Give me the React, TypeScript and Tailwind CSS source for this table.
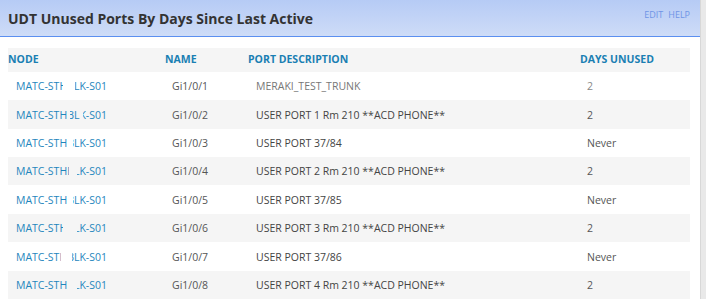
import React from 'react'

type Row = { node: string; masks: [number, number][]; name: string; desc: string; days: string; dim?: boolean }

const rows: Row[] = [
  { node: 'MATC-STHBLK-S01', masks: [[47, 12]], name: 'Gi1/0/1', desc: 'MERAKI_TEST_TRUNK', days: '2', dim: true },
  { node: 'MATC-STHBLK-S01', masks: [[51, 3], [64, 3]], name: 'Gi1/0/2', desc: 'USER PORT 1 Rm 210 **ACD PHONE**', days: '2' },
  { node: 'MATC-STHBLK-S01', masks: [[51, 6]], name: 'Gi1/0/3', desc: 'USER PORT 37/84', days: 'Never' },
  { node: 'MATC-STHBLK-S01', masks: [[53, 8]], name: 'Gi1/0/4', desc: 'USER PORT 2 Rm 210 **ACD PHONE**', days: '2' },
  { node: 'MATC-STHBLK-S01', masks: [[51, 6]], name: 'Gi1/0/5', desc: 'USER PORT 37/85', days: 'Never' },
  { node: 'MATC-STHBLK-S01', masks: [[47, 14]], name: 'Gi1/0/6', desc: 'USER PORT 3 Rm 210 **ACD PHONE**', days: '2' },
  { node: 'MATC-STHBLK-S01', masks: [[45, 11]], name: 'Gi1/0/7', desc: 'USER PORT 37/86', days: 'Never' },
  { node: 'MATC-STHBLK-S01', masks: [[51, 10]], name: 'Gi1/0/8', desc: 'USER PORT 4 Rm 210 **ACD PHONE**', days: '2' },
]

const App = () => {
  return (
    <div className="flex h-[299px] w-[706px] overflow-hidden bg-white" style={{ fontFamily: '"Open Sans", sans-serif' }}>
      <div className="flex w-[700px] flex-col">
        {/* header bar */}
        <div className="flex h-[39px] items-start justify-between border-b-[1.5px] border-[#5b8ff0] bg-gradient-to-b from-[#b6cbf5] to-[#cedcf7] pl-[8px] pr-[10px]">
          <h1 className="mt-[9px] text-[14px] font-bold leading-[20px] text-[#333333]">UDT Unused Ports By Days Since Last Active</h1>
          <div className="mt-[9px] flex gap-[5px] text-[9px] leading-[11px] text-[#6f95e6]">
            <span>EDIT</span>
            <span>HELP</span>
          </div>
        </div>

        {/* table */}
        <div className="ml-[8px] mr-[10px] mt-[11px]">
          <div className="flex h-[24px] items-center bg-[#f5f5f5] text-[10.5px] font-bold text-[#1a7fb3]">
            <div className="w-[157px]">NODE</div>
            <div className="w-[83px]">NAME</div>
            <div className="w-[332px]">PORT DESCRIPTION</div>
            <div>DAYS UNUSED</div>
          </div>
          {rows.map((r, i) => (
            <div
              key={r.name}
              className={`flex h-[28.4px] items-center pt-[2px] text-[10.5px] ${i % 2 === 1 ? 'bg-[#f5f5f5]' : 'bg-white'}`}
            >
              <div className="w-[164px] pl-[8px] text-[#1f86bd]">
                <span className="relative">
                  {r.node}
                  {/* redacted part of the node name */}
                  {r.masks.map(([left, width]) => (
                    <span
                      key={left}
                      className={`absolute top-0 h-full ${i % 2 === 1 ? 'bg-[#f5f5f5]' : 'bg-white'}`}
                      style={{ left, width }}
                    />
                  ))}
                </span>
              </div>
              <div className="w-[84px] text-[#555555]">{r.name}</div>
              <div className={`w-[331px] ${r.dim ? 'text-[#777777]' : 'text-[#444444]'}`}>{r.desc}</div>
              <div className={r.dim ? 'text-[#888888]' : 'text-[#555555]'}>{r.days}</div>
            </div>
          ))}
        </div>
      </div>
      {/* scrollbar */}
      <div className="w-[6px] border-l border-[#d8d8d8] bg-[#e9e9e9]" />
    </div>
  )
}

export default App
